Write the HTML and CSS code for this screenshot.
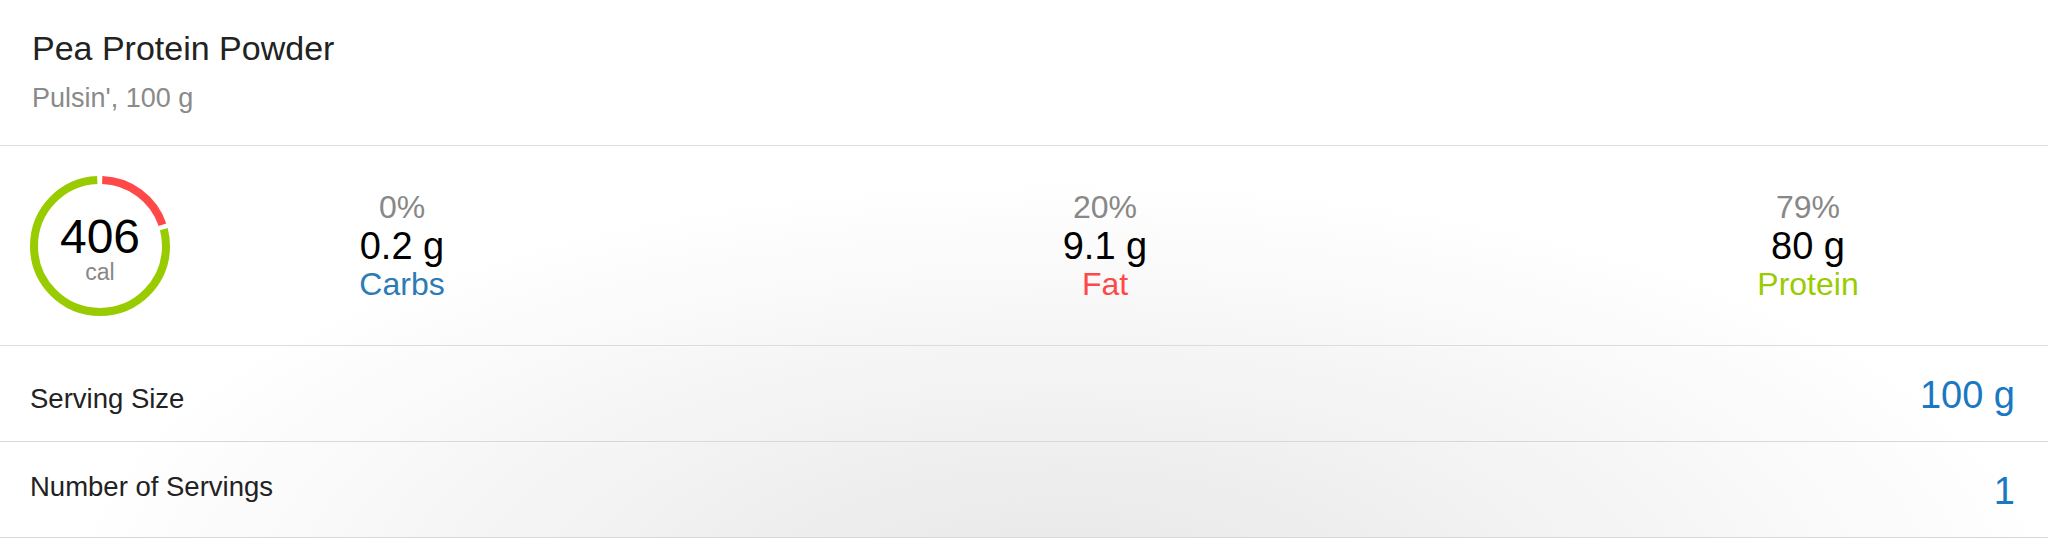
FILE: index.html
```html
<!DOCTYPE html>
<html lang="en">
<head>
    <meta charset="UTF-8">
    <meta name="viewport" content="width=device-width, initial-scale=1.0">
    <title>Pea Protein Powder</title>
    <link rel="stylesheet" href="styles.css">
</head>
<body>
    <div class="food-header">
        <div class="food-name">Pea Protein Powder</div>
        <div class="food-brand">Pulsin', 100 g</div>
    </div>

    <div class="macro-row">
        <div class="cal-ring">
            <svg width="140" height="140" viewBox="0 0 140 140">
                <g transform="rotate(-90 70 70)">
                    <!-- fat 20% -->
                    <circle cx="70" cy="70" r="66" fill="none" stroke="#ff4848" stroke-width="8"
                            stroke-dasharray="79.5 414.7" stroke-dashoffset="-2.3"/>
                    <!-- protein 79% -->
                    <circle cx="70" cy="70" r="66" fill="none" stroke="#99cc00" stroke-width="8"
                            stroke-dasharray="324.8 414.7" stroke-dashoffset="-86.4"/>
                </g>
            </svg>
            <div class="cal-text">
                <div class="cal-num">406</div>
                <div class="cal-unit">cal</div>
            </div>
        </div>

        <div class="macros">
            <div class="macro">
                <div class="macro-pct">0%</div>
                <div class="macro-val">0.2 g</div>
                <div class="macro-label carbs">Carbs</div>
            </div>
            <div class="macro">
                <div class="macro-pct">20%</div>
                <div class="macro-val">9.1 g</div>
                <div class="macro-label fat">Fat</div>
            </div>
            <div class="macro">
                <div class="macro-pct">79%</div>
                <div class="macro-val">80 g</div>
                <div class="macro-label protein">Protein</div>
            </div>
        </div>
    </div>

    <div class="field-row serving">
        <div class="field-label">Serving Size</div>
        <div class="field-value">100 g</div>
    </div>
    <div class="field-row count">
        <div class="field-label">Number of Servings</div>
        <div class="field-value">1</div>
    </div>
</body>
</html>
```

FILE: styles.css
```css
body {
    margin: 0;
    font-family: "Liberation Sans", Arial, sans-serif;
    color: #222;
    background: radial-gradient(ellipse 1000px 420px at 1060px 600px, #e6e6e6 0%, #ffffff 100%) no-repeat;
    background-color: #fff;
    min-height: 538px;
}
.food-header {
    padding: 28px 33px 31px 32px;
    border-bottom: 1px solid #dcdcdc;
}
.food-name {
    font-size: 34px;
    line-height: 40px;
    color: #222;
}
.food-brand {
    margin-top: 15px;
    font-size: 27px;
    line-height: 31px;
    color: #8a8a8a;
}
.macro-row {
    display: flex;
    align-items: center;
    height: 199px;
    padding-left: 30px;
    border-bottom: 1px solid #dcdcdc;
}
.cal-ring {
    position: relative;
    width: 140px;
    height: 140px;
    flex-shrink: 0;
}
.cal-ring svg {
    display: block;
}
.cal-text {
    position: absolute;
    top: 0;
    left: 0;
    right: 0;
    bottom: 0;
    display: flex;
    flex-direction: column;
    align-items: center;
    justify-content: center;
    padding-top: 6px;
}
.cal-num {
    font-size: 48px;
    line-height: 46px;
    color: #000;
}
.cal-unit {
    font-size: 23px;
    line-height: 24px;
    color: #888;
}
.macros {
    display: flex;
    gap: 403px;
    margin-left: 82px;
}
.macro {
    width: 300px;
    text-align: center;
}
.macro-pct {
    font-size: 32px;
    line-height: 36px;
    color: #888;
}
.macro-val {
    font-size: 38px;
    line-height: 38px;
    margin-top: 2px;
    color: #000;
}
.macro-label {
    font-size: 32px;
    line-height: 36px;
    margin-top: 1px;
}
.carbs {
    color: #2d7bb6;
}
.fat {
    color: #ff4848;
}
.protein {
    color: #99cc00;
}
.field-row {
    display: flex;
    align-items: center;
    justify-content: space-between;
    height: 95px;
    padding: 0 33px 0 30px;
    border-bottom: 1px solid #d8d8d8;
}
.field-label {
    font-size: 27.5px;
    line-height: 32px;
    color: #222;
}
.serving .field-label {
    padding-top: 10px;
}
.count .field-label {
    padding-bottom: 5px;
}
.field-value {
    font-size: 38px;
    line-height: 42px;
    padding-top: 2px;
    color: #1a78c2;
}
```
